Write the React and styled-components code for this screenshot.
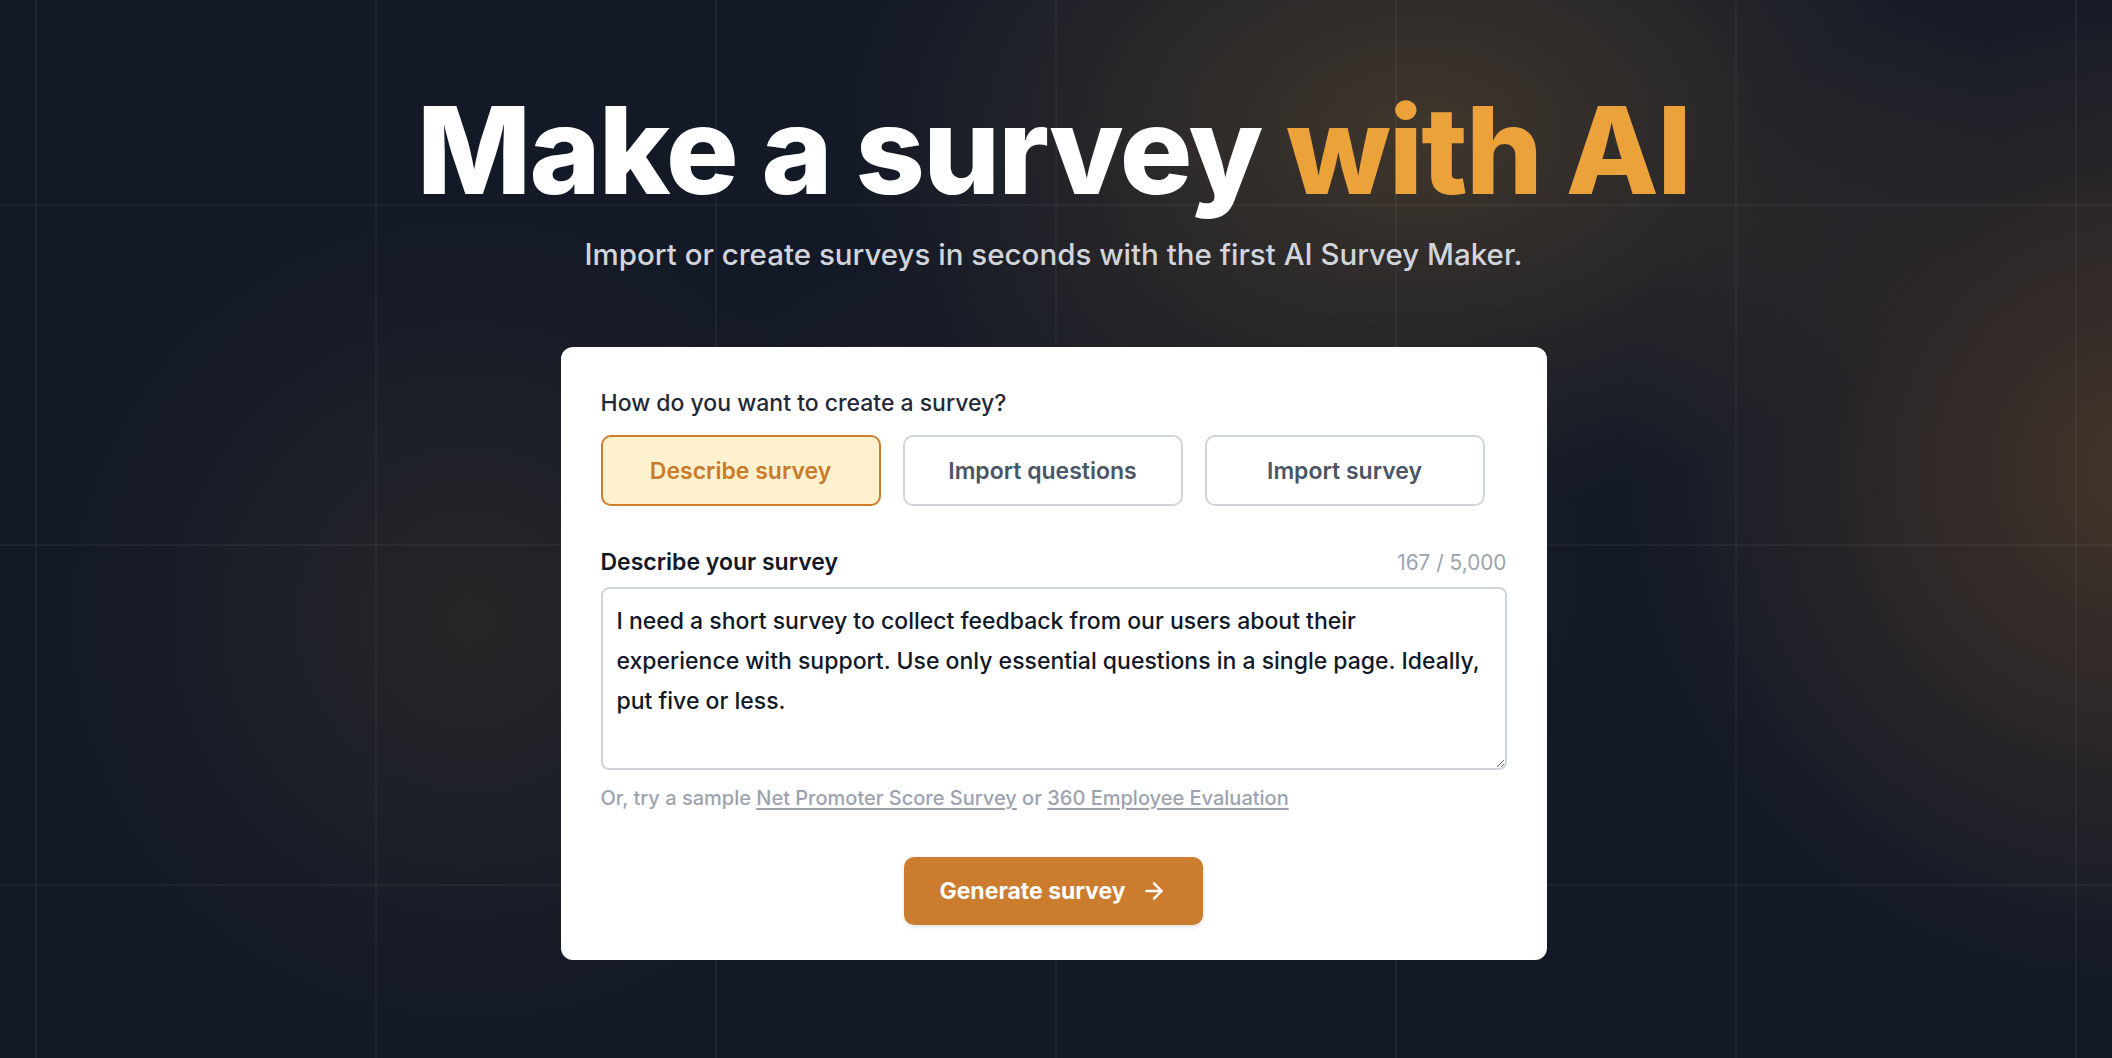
import React, { useState } from 'react';
import styled, { createGlobalStyle } from 'styled-components';
import { ArrowRight } from 'lucide-react';

const GlobalStyle = createGlobalStyle`
  html,
  body {
    margin: 0;
    padding: 0;
    background-color: #131927;
  }

  * {
    box-sizing: border-box;
  }
`;

const Page = styled.main`
  min-height: 100vh;
  display: flex;
  flex-direction: column;
  align-items: center;
  padding: 84px 5px 0 0;
  font-family: Inter, 'Noto Sans', sans-serif;
  background-color: #131927;
  background-image:
    linear-gradient(to right, rgba(255, 255, 255, 0.045) 0, rgba(255, 255, 255, 0.045) 2px, transparent 2px),
    linear-gradient(to bottom, rgba(255, 255, 255, 0.045) 0, rgba(255, 255, 255, 0.045) 2px, transparent 2px),
    radial-gradient(580px 380px at 1420px 130px, rgba(66, 56, 44, 0.95), rgba(66, 56, 44, 0) 100%),
    radial-gradient(520px 520px at 2140px 470px, rgba(70, 54, 42, 0.95), rgba(70, 54, 42, 0) 100%),
    radial-gradient(420px 420px at 470px 620px, rgba(52, 46, 40, 0.6), rgba(52, 46, 40, 0) 100%),
    radial-gradient(520px 360px at 1100px 560px, rgba(48, 42, 38, 0.5), rgba(48, 42, 38, 0) 100%);
  background-size: 340px 340px, 340px 340px, 100% 100%, 100% 100%, 100% 100%, 100% 100%;
  background-position: 35px 0, 0 204px, 0 0, 0 0, 0 0, 0 0;
  background-repeat: repeat, repeat, no-repeat, no-repeat, no-repeat, no-repeat;
`;

const Title = styled.h1`
  margin: 0;
  font-size: 121px;
  line-height: 133px;
  font-weight: 800;
  letter-spacing: -1.8px;
  color: #ffffff;
  text-align: center;
`;

const Accent = styled.span`
  color: #eba23b;
`;

const Subtitle = styled.p`
  margin: 19px 0 0;
  font-size: 29.5px;
  line-height: 36px;
  font-weight: 500;
  color: #d1d5db;
  text-align: center;
`;

const Card = styled.section`
  width: 986px;
  margin-top: 75px;
  padding: 42px 40px 35px;
  background: #ffffff;
  border-radius: 12px;
  display: flex;
  flex-direction: column;
`;

const Label = styled.div`
  font-size: 23px;
  line-height: 28px;
  font-weight: ${({ $strong }) => ($strong ? 600 : 500)};
  color: ${({ $strong }) => ($strong ? '#111827' : '#1f2937')};
`;

const Options = styled.div`
  display: flex;
  gap: 22px;
  margin-top: 18px;
`;

const Option = styled.button`
  width: 280px;
  height: 71px;
  border-radius: 10px;
  border: 2px solid ${({ $active }) => ($active ? '#d07c2c' : '#d1d5db')};
  background: ${({ $active }) => ($active ? '#fdf2cd' : '#ffffff')};
  color: ${({ $active }) => ($active ? '#cc7a2c' : '#4b5563')};
  font-family: inherit;
  font-size: 23px;
  font-weight: 600;
  cursor: pointer;
`;

const FieldHead = styled.div`
  display: flex;
  justify-content: space-between;
  align-items: center;
  margin-top: 42px;
`;

const Counter = styled.span`
  font-size: 20.8px;
  color: #9ca3af;
`;

const TextArea = styled.textarea`
  margin-top: 11px;
  width: 100%;
  height: 183px;
  padding: 12px 10px 9px 14px;
  border: 2px solid #d1d5db;
  border-radius: 8px;
  font-family: inherit;
  font-size: 23px;
  line-height: 40px;
  font-weight: 500;
  color: #111827;
  white-space: pre;
  overflow: hidden;
  resize: vertical;
  outline: none;
`;

const Hint = styled.p`
  margin: 15px 0 0;
  font-size: 20px;
  line-height: 26px;
  font-weight: 500;
  color: #9ca3af;
`;

const SampleLink = styled.a`
  color: #9ca3af;
  text-decoration: underline;
  text-decoration-thickness: 2px;
  text-underline-offset: 3px;
  cursor: pointer;
`;

const Actions = styled.div`
  display: flex;
  justify-content: center;
  margin-top: 46px;
`;

const Generate = styled.button`
  display: flex;
  align-items: center;
  gap: 15px;
  height: 68px;
  padding: 0 36px 0 35px;
  border: none;
  border-radius: 10px;
  background: #cc7c2e;
  color: #ffffff;
  font-family: inherit;
  font-size: 23px;
  font-weight: 700;
  box-shadow: 0 2px 4px rgba(0, 0, 0, 0.12);
  cursor: pointer;
`;

const initialText =
  'I need a short survey to collect feedback from our users about their\nexperience with support. Use only essential questions in a single page. Ideally,\nput five or less.';

const App = () => {
  const [mode, setMode] = useState('describe');
  const [text, setText] = useState(initialText);

  return (
    <>
      <GlobalStyle />
      <Page>
        <Title>
          Make a survey <Accent>with AI</Accent>
        </Title>
        <Subtitle>Import or create surveys in seconds with the first AI Survey Maker.</Subtitle>
        <Card>
          <Label>How do you want to create a survey?</Label>
          <Options>
            <Option $active={mode === 'describe'} onClick={() => setMode('describe')}>
              Describe survey
            </Option>
            <Option $active={mode === 'questions'} onClick={() => setMode('questions')}>
              Import questions
            </Option>
            <Option $active={mode === 'survey'} onClick={() => setMode('survey')}>
              Import survey
            </Option>
          </Options>
          <FieldHead>
            <Label $strong>Describe your survey</Label>
            <Counter>167 / 5,000</Counter>
          </FieldHead>
          <TextArea wrap="off" value={text} onChange={(e) => setText(e.target.value)} />
          <Hint>
            Or, try a sample <SampleLink>Net Promoter Score Survey</SampleLink> or{' '}
            <SampleLink>360 Employee Evaluation</SampleLink>
          </Hint>
          <Actions>
            <Generate>
              Generate survey
              <ArrowRight size={26} strokeWidth={2.25} />
            </Generate>
          </Actions>
        </Card>
      </Page>
    </>
  );
};

export default App;
